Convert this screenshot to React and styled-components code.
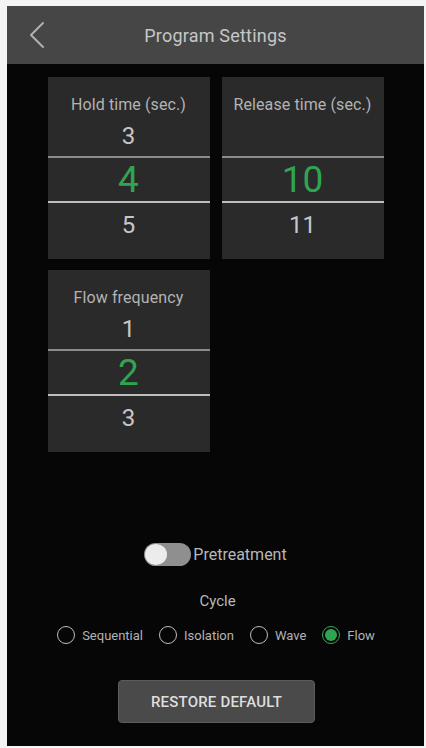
import React from "react";
import styled, { createGlobalStyle } from "styled-components";

const Global = createGlobalStyle`
  html, body { margin: 0; padding: 0; background: #ffffff; }
  body { font-family: Roboto, "Noto Sans", "Liberation Sans", sans-serif; }
  * { box-sizing: border-box; }
`;

const Page = styled.div`
  width: 426px;
  height: 748px;
  padding: 6px 2px 2px 7px;
  background: #f4f4f4;
`;

const Screen = styled.div`
  width: 417px;
  height: 740px;
  background: #060606;
  display: flex;
  flex-direction: column;
  align-items: center;
`;

const Header = styled.div`
  width: 100%;
  height: 58px;
  background: #464646;
  display: grid;
  grid-template-columns: 58px 1fr 58px;
  align-items: center;
`;

const Back = styled.div`
  display: flex;
  align-items: center;
  justify-content: center;
  height: 100%;
  padding-left: 2px;
`;

const Title = styled.div`
  text-align: center;
  color: #c6c6c6;
  font-size: 18px;
  letter-spacing: 0.2px;
`;

const Grid = styled.div`
  margin-top: 13px;
  display: grid;
  grid-template-columns: 162px 162px;
  column-gap: 12px;
  row-gap: 11px;
`;

const Card = styled.div`
  background: #2a2a2a;
  height: 182px;
  padding: 18px 0 12px;
  display: flex;
  flex-direction: column;
`;

const CardTitle = styled.div`
  height: 20px;
  line-height: 20px;
  text-align: center;
  color: #b3b3b3;
  font-size: 16px;
  letter-spacing: 0.1px;
`;

const Item = styled.div`
  height: ${(p) => p.$h}px;
  display: flex;
  align-items: center;
  justify-content: center;
  color: ${(p) => (p.$selected ? "#2fa552" : "#c6c6c6")};
  font-size: ${(p) => (p.$selected ? "37px" : "24px")};
`;

const Divider = styled.div`
  height: 2px;
  background: ${(p) => p.$c};
`;

const ToggleRow = styled.div`
  margin-top: 91px;
  display: flex;
  align-items: center;
  gap: 2px;
`;

const Toggle = styled.div`
  width: 47px;
  height: 23px;
  border-radius: 12px;
  background: #8f8f8f;
  padding: 1px;
  display: flex;
`;

const Knob = styled.div`
  width: 22px;
  height: 21px;
  border-radius: 50%;
  background: #ececec;
`;

const Label = styled.div`
  color: #b8b8b8;
  font-size: 16px;
`;

const Cycle = styled.div`
  margin-top: 25px;
  height: 20px;
  line-height: 20px;
  color: #b8b8b8;
  font-size: 15px;
  margin-left: 4px;
`;

const Radios = styled.div`
  margin-top: 14px;
  height: 20px;
  display: flex;
  align-items: center;
  gap: 16px;
  margin-left: 1px;
`;

const RadioItem = styled.div`
  display: flex;
  align-items: center;
  gap: 7px;
`;

const Circle = styled.div`
  width: 18px;
  height: 18px;
  border-radius: 50%;
  border: 1.5px solid ${(p) => (p.$on ? "#3aa85a" : "#bdbdbd")};
  display: flex;
  align-items: center;
  justify-content: center;
`;

const Dot = styled.div`
  width: 12px;
  height: 12px;
  border-radius: 50%;
  background: #2fa552;
`;

const RadioText = styled.div`
  color: #b3b3b3;
  font-size: 13px;
`;

const Button = styled.button`
  margin-top: 35px;
  width: 197px;
  height: 43px;
  background: #4a4a4a;
  border: 1px solid #5c5c5c;
  border-radius: 4px;
  color: #dedede;
  font-family: Roboto, "Liberation Sans", sans-serif;
  font-size: 15px;
  font-weight: 500;
  letter-spacing: 0.2px;
  margin-left: 2px;
`;

const Picker = ({ title, items }) => (
  <Card>
    <CardTitle>{title}</CardTitle>
    <Item $h={41}>{items[0]}</Item>
    <Divider $c="#8c8c8c" />
    <Item $h={43} $selected>{items[1]}</Item>
    <Divider $c="#bdbdbd" />
    <Item $h={44}>{items[2]}</Item>
  </Card>
);

const options = ["Sequential", "Isolation", "Wave", "Flow"];

export default function App() {
  return (
    <Page>
      <Global />
      <Screen>
        <Header>
          <Back>
            <svg width="16" height="28" viewBox="0 0 16 28">
              <path d="M14 2 L2 14 L14 26" fill="none" stroke="#b0b0b0" strokeWidth="2" strokeLinecap="round" strokeLinejoin="round" />
            </svg>
          </Back>
          <Title>Program Settings</Title>
          <div />
        </Header>
        <Grid>
          <Picker title="Hold time (sec.)" items={["3", "4", "5"]} />
          <Picker title="Release time (sec.)" items={["", "10", "11"]} />
          <Picker title="Flow frequency" items={["1", "2", "3"]} />
        </Grid>
        <ToggleRow>
          <Toggle>
            <Knob />
          </Toggle>
          <Label>Pretreatment</Label>
        </ToggleRow>
        <Cycle>Cycle</Cycle>
        <Radios>
          {options.map((o) => (
            <RadioItem key={o}>
              <Circle $on={o === "Flow"}>{o === "Flow" && <Dot />}</Circle>
              <RadioText>{o}</RadioText>
            </RadioItem>
          ))}
        </Radios>
        <Button>RESTORE DEFAULT</Button>
      </Screen>
    </Page>
  );
}
